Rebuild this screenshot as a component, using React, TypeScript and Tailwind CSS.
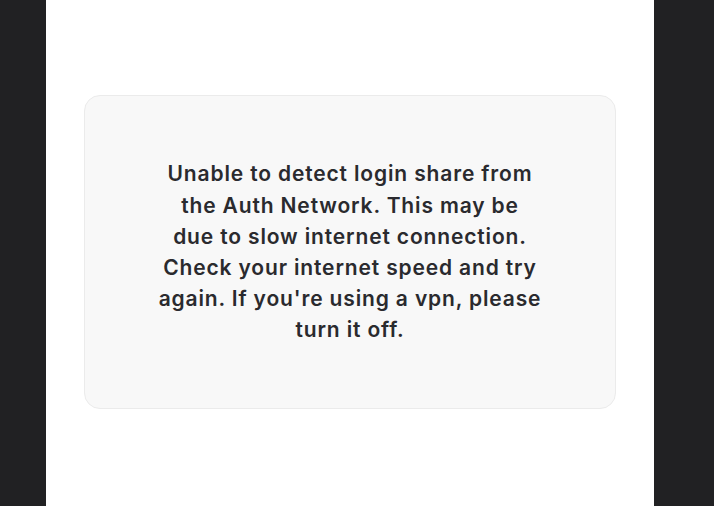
const LINES = [
  'Unable to detect login share from',
  'the Auth Network. This may be',
  'due to slow internet connection.',
  'Check your internet speed and try',
  "again. If you're using a vpn, please",
  'turn it off.',
];

export default function App() {
  return (
    <div className="min-h-[506px] w-full bg-[#212123] flex">
      <div className="ml-[46px] w-[608px] min-h-[506px] bg-white px-[38px] pt-[95px]">
        <div className="h-[314px] rounded-2xl border border-[#ebebeb] bg-[#f8f8f8] flex items-center justify-center">
          <p
            className="text-center text-[21px] leading-[31.2px] font-semibold text-[#2a2a2e] tracking-[0.85px]"
            style={{ fontFamily: "'Inter', 'Noto Sans', sans-serif" }}
          >
            {LINES.map((l, i) => (
              <span key={i} className="block whitespace-nowrap">{l}</span>
            ))}
          </p>
        </div>
      </div>
    </div>
  );
}
